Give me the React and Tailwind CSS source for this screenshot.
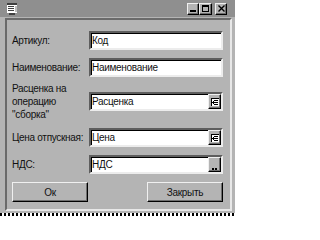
const raised =
  'bg-[#b4b4b4] border border-t-[#f0f0f0] border-l-[#f0f0f0] border-b-black border-r-black shadow-[inset_-1px_-1px_0_#6e6e6e]'

const ListGlyph = () => (
  <svg width="8" height="8" viewBox="0 0 8 8" shapeRendering="crispEdges">
    <rect x="0" y="0" width="8" height="8" fill="#fff" />
    <rect x="0" y="0" width="8" height="1" fill="#000" />
    <rect x="0" y="0" width="1" height="8" fill="#000" />
    <rect x="3" y="2" width="4" height="1" fill="#000" />
    <rect x="3" y="4" width="4" height="1" fill="#000" />
    <rect x="3" y="6" width="4" height="1" fill="#000" />
    <rect x="1" y="4" width="1" height="1" fill="#000" />
    <rect x="2" y="3" width="1" height="3" fill="#000" />
  </svg>
)

const DotsGlyph = () => (
  <svg width="7" height="3" viewBox="0 0 7 3" shapeRendering="crispEdges">
    <rect x="1" y="1" width="2" height="2" fill="#000" />
    <rect x="4" y="1" width="2" height="2" fill="#000" />
  </svg>
)

const Field = ({ value, button }) => (
  <div className="w-[134px] h-[19px] flex bg-white border-2 border-t-[#5e5e5e] border-l-[#5e5e5e] border-b-[#ececec] border-r-[#ececec] shadow-[inset_1px_1px_0_#000]">
    <span className="flex-1 pl-[1px] leading-[15px] truncate">{value}</span>
    {button && (
      <span className={`w-[13px] h-[15px] flex items-center justify-center ${raised}`}>
        {button === 'list' ? <ListGlyph /> : <span className="mt-[7px]"><DotsGlyph /></span>}
      </span>
    )}
  </div>
)

const Row = ({ label, className = '', children }) => (
  <div className={`flex items-center ${className}`}>
    <div className="w-[77px] leading-[13px] whitespace-nowrap">{label}</div>
    {children}
  </div>
)

const TitleButton = ({ children, className = '' }) => (
  <div className={`h-[12px] flex items-center justify-center ${raised} ${className}`}>
    {children}
  </div>
)

export default function App() {
  return (
    <div
      className="w-[235px] h-[216px] bg-[#b4b4b4] text-[#111] text-[10px] tracking-[-0.3px] overflow-hidden flex flex-col"
      style={{ fontFamily: '"Liberation Sans", Arial, sans-serif' }}
    >
      {/* Title bar */}
      <div className="h-[17px] bg-[#8f8f8f] flex items-center pl-[7px] pr-[8px]">
        <svg width="11" height="12" viewBox="0 0 11 12" shapeRendering="crispEdges">
          <rect x="0" y="0" width="10" height="10" fill="#fff" />
          <rect x="0" y="0" width="10" height="2" fill="#404040" />
          <rect x="1" y="3" width="6" height="1" fill="#404040" />
          <rect x="1" y="5" width="6" height="1" fill="#404040" />
          <rect x="1" y="7" width="6" height="1" fill="#404040" />
          <rect x="8" y="3" width="2" height="6" fill="#bdbdbd" />
          <rect x="2" y="10" width="6" height="2" fill="#404040" />
        </svg>
        <div className="flex-1" />
        <TitleButton className="w-[12px]">
          <span className="w-[6px] h-[2px] bg-black mt-[5px]" />
        </TitleButton>
        <TitleButton className="w-[13px]">
          <span className="w-[7px] h-[7px] border border-black border-t-2" />
        </TitleButton>
        <TitleButton className="w-[12px] ml-[3px]">
          <svg width="7" height="7" viewBox="0 0 7 7">
            <path d="M0.5 0.5L6.5 6.5M6.5 0.5L0.5 6.5" stroke="#000" strokeWidth="1.4" />
          </svg>
        </TitleButton>
      </div>

      {/* Client area */}
      <div className="mt-[1px] ml-[5px] w-[227px] h-[193px] border-2 border-t-[#6a6a6a] border-l-[#6a6a6a] border-b-[#e8e8e8] border-r-[#e8e8e8] pl-[5px] flex flex-col">
        <Row label="Артикул:" className="mt-[11px]">
          <Field value="Код" />
        </Row>
        <Row label="Наименование:" className="mt-[8px]">
          <Field value="Наименование" />
        </Row>
        <Row
          label={
            <>
              Расценка на
              <br />
              операцию
              <br />
              "сборка"
            </>
          }
          className="mt-[5px]"
        >
          <Field value="Расценка" button="list" />
        </Row>
        <Row label="Цена отпускная:" className="mt-[7px]">
          <Field value="Цена" button="list" />
        </Row>
        <Row label="НДС:" className="mt-[8px]">
          <Field value="НДС" button="dots" />
        </Row>
        <div className="mt-[8px] flex justify-between w-[211px]">
          <button className={`w-[76px] h-[20px] ${raised}`}>Ок</button>
          <button className={`w-[76px] h-[20px] ${raised}`}>Закрыть</button>
        </div>
      </div>

      <div className="mt-[2px] h-[3px] bg-[repeating-linear-gradient(90deg,#000_0_2px,#fff_2px_4px)]" />
    </div>
  )
}
